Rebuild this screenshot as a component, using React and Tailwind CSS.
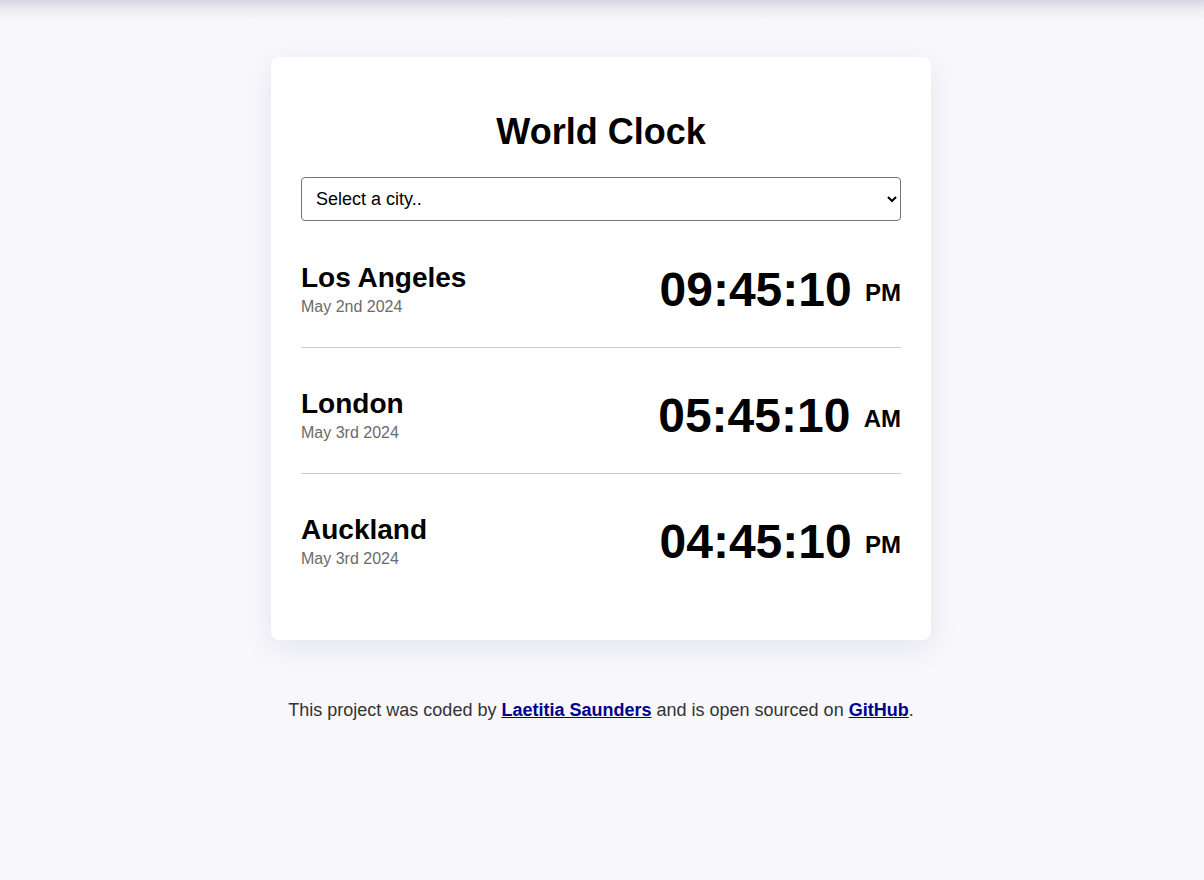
export default function App() {
  const cities = [
    { name: "Los Angeles", date: "May 2nd 2024", time: "09:45:10", ampm: "PM" },
    { name: "London", date: "May 3rd 2024", time: "05:45:10", ampm: "AM" },
    { name: "Auckland", date: "May 3rd 2024", time: "04:45:10", ampm: "PM" },
  ];
  return (
    <div
      className="relative min-h-[880px] bg-[#f7f7fc] pt-[57px]"
      style={{ fontFamily: '"Liberation Sans", Arial, sans-serif' }}
    >
      <div className="absolute top-0 left-0 right-0 h-[22px] bg-gradient-to-b from-[rgba(40,30,70,0.15)] via-[rgba(40,30,70,0.04)] to-transparent pointer-events-none" />
      <div className="mx-auto w-[660px] -translate-x-[1px] bg-white rounded-lg shadow-[0_8px_30px_rgba(30,20,80,0.08)] px-[30px] pt-[54px] pb-[30px]">
        <h1 className="text-center text-[36px] font-bold text-black leading-[41px] mb-[25px]">
          World Clock
        </h1>
        <select className="block w-full h-[44px] border border-[#767676] rounded-[4px] pl-[10px] pr-[6px] text-[18px] text-black bg-white">
          <option>Select a city..</option>
        </select>
        <div>
          {cities.map((c, i) => (
            <div
              key={c.name}
              className={
                "flex items-start justify-between " +
                (i === 0 ? "pt-[41px] " : "pt-[40px] ") +
                (i < cities.length - 1 ? "pb-[30px] border-b border-[#cccccc]" : "pb-[41px]")
              }
            >
              <div>
                <div className="text-[28px] font-bold text-black leading-[32px]">{c.name}</div>
                <div className="text-[16px] text-[#6b6b6b] leading-[20px] mt-[3px]">{c.date}</div>
              </div>
              <div className="h-[54px] mt-[1px] text-[48px] font-bold text-black leading-[54px] whitespace-nowrap">
                {c.time}{" "}
                <span className="text-[24px] align-middle">{c.ampm}</span>
              </div>
            </div>
          ))}
        </div>
      </div>
      <p className="text-center text-[18px] text-[#333333] mt-[57px] -translate-x-[1px]">
        This project was coded by{" "}
        <a href="#" className="font-bold text-[#00008b] underline">
          Laetitia Saunders
        </a>{" "}
        and is open sourced on{" "}
        <a href="#" className="font-bold text-[#00008b] underline">
          GitHub
        </a>
        .
      </p>
    </div>
  );
}
